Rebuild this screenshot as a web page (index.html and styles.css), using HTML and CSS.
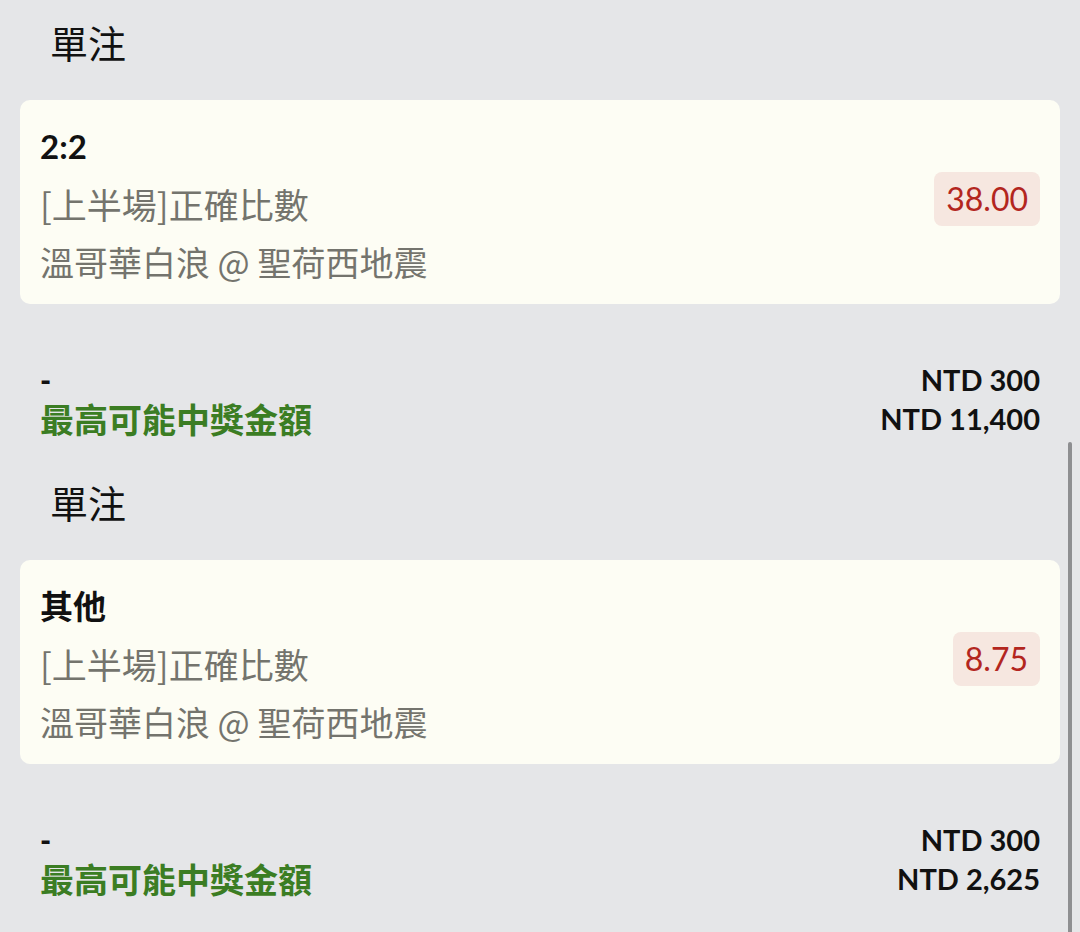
FILE: index.html
```html
<!DOCTYPE html>
<html lang="zh-Hant">
<head>
    <meta charset="UTF-8">
    <meta name="viewport" content="width=device-width, initial-scale=1.0">
    <title>單注</title>
    <link rel="stylesheet" href="styles.css">
</head>
<body>
    <main class="slip-list">
        <section class="slip">
            <h2 class="slip-title">單注</h2>
            <div class="bet-card">
                <div class="bet-info">
                    <div class="bet-pick">2:2</div>
                    <div class="bet-market">[上半場]正確比數</div>
                    <div class="bet-match">溫哥華白浪 @ 聖荷西地震</div>
                </div>
                <div class="bet-odds">38.00</div>
            </div>
            <div class="slip-summary">
                <div class="summary-row">
                    <span class="stake-label">-</span>
                    <span class="amount">NTD 300</span>
                </div>
                <div class="summary-row">
                    <span class="payout-label">最高可能中獎金額</span>
                    <span class="amount">NTD 11,400</span>
                </div>
            </div>
        </section>

        <section class="slip">
            <h2 class="slip-title">單注</h2>
            <div class="bet-card">
                <div class="bet-info">
                    <div class="bet-pick">其他</div>
                    <div class="bet-market">[上半場]正確比數</div>
                    <div class="bet-match">溫哥華白浪 @ 聖荷西地震</div>
                </div>
                <div class="bet-odds">8.75</div>
            </div>
            <div class="slip-summary">
                <div class="summary-row">
                    <span class="stake-label">-</span>
                    <span class="amount">NTD 300</span>
                </div>
                <div class="summary-row">
                    <span class="payout-label">最高可能中獎金額</span>
                    <span class="amount">NTD 2,625</span>
                </div>
            </div>
        </section>
    </main>
    <div class="scroll-thumb"></div>
</body>
</html>
```

FILE: styles.css
```css
body {
    margin: 0;
    padding: 0;
    background-color: #e5e6e8;
    font-family: Lato, "Noto Sans CJK TC", sans-serif;
    color: #111;
    overflow: hidden;
}

.slip-list {
    padding-top: 12px;
}

.slip {
    padding-bottom: 34px;
}

.slip-title {
    margin: 0 0 28px 0;
    padding-left: 50px;
    font-family: "Noto Sans CJK TC", sans-serif;
    font-size: 38px;
    font-weight: 400;
    line-height: 60px;
    color: #111;
}

.bet-card {
    display: flex;
    align-items: center;
    justify-content: space-between;
    margin: 0 20px;
    padding: 17px 20px 13px 20px;
    background-color: #fdfdf4;
    border-radius: 10px;
}

.bet-pick {
    font-size: 33px;
    font-weight: 700;
    line-height: 58px;
    color: #111;
}

.bet-market,
.bet-match {
    font-family: "Noto Sans CJK TC", sans-serif;
    font-size: 34px;
    line-height: 58px;
    color: #74746d;
}

.bet-market {
    font-size: 35px;
}

.bet-odds {
    margin-bottom: 10px;
    padding: 0 12px;
    line-height: 54px;
    font-size: 32px;
    color: #b3261e;
    background-color: #f6e7e0;
    border-radius: 8px;
}

.slip-summary {
    margin-top: 56px;
    padding: 0 40px;
}

.summary-row {
    display: flex;
    align-items: center;
    justify-content: space-between;
    height: 39px;
}

.stake-label {
    font-size: 30px;
    font-weight: 900;
}

.payout-label {
    font-size: 34px;
    font-weight: 700;
    color: #3b7d23;
}

.amount {
    font-size: 29px;
    font-weight: 700;
    color: #111;
}

/* scrollbar thumb drawn over the right edge */
.scroll-thumb {
    position: absolute;
    top: 442px;
    right: 8px;
    width: 4px;
    height: 500px;
    background-color: #8e8f91;
    border-radius: 2px;
}
```
